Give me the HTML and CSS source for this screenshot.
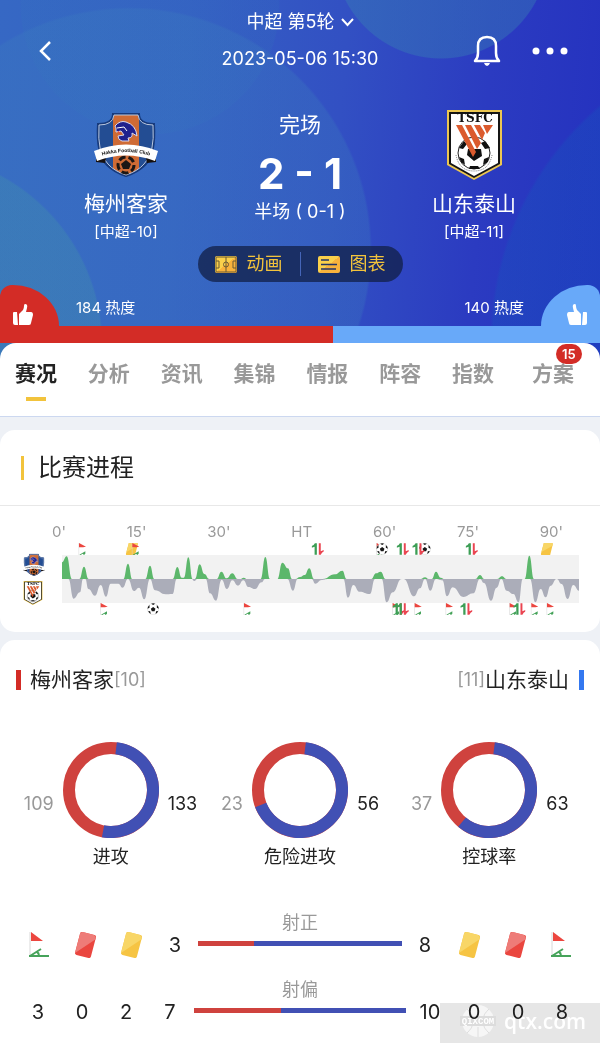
FILE: index.html
```
<!DOCTYPE html>
<html lang="zh-CN">
<head>
    <meta charset="UTF-8">
    <meta name="viewport" content="width=device-width, initial-scale=1.0">
    <title>梅州客家 2-1 山东泰山</title>
    <link rel="stylesheet" href="styles.css">
</head>
<body>
    <!-- Shared icons -->
    <svg class="sprite" aria-hidden="true">
        <defs>
            <linearGradient id="gold" x1="0" y1="0" x2="1" y2="1">
                <stop offset="0.5" stop-color="#fad04b"/>
                <stop offset="0.5" stop-color="#f8b23c"/>
            </linearGradient>
            <clipPath id="shield">
                <path d="M17 2H46Q46 12 62 12Q64 42 52 53Q44 60 32 64Q20 60 12 53Q0 42 2 12Q17 12 17 2Z"/>
            </clipPath>
        </defs>
        <symbol id="crest-hakka" viewBox="0 0 64 66">
            <path d="M19 2H45Q45 12 60 12Q62 42 51 53Q44 60 32 64Q20 60 13 53Q2 42 4 12Q19 12 19 2Z" fill="#234d93"/>
            <path d="M19 2H45V64H19Z" fill="#cf6b35" clip-path="url(#shield)"/>
            <path d="M19 2H45Q45 12 60 12Q62 42 51 53Q44 60 32 64Q20 60 13 53Q2 42 4 12Q19 12 19 2Z" fill="none" stroke="#173a7c" stroke-width="2"/>
            <path d="M20 3H44Q45 13 59 13Q61 42 50 52Q44 59 32 63Q20 59 14 52Q3 42 5 13Q19 13 20 3Z" fill="none" stroke="#b9c6dc"/>
            <path d="M21 14Q26 8 32 10Q42 13 43 24L38 21Q39 26 34 26L35 29L28 29Q24 28 24 24L30 23L27 19L22 20L22 16Z" fill="#21208d" stroke="#d9d8ee" stroke-width="1"/>
            <path d="M23 16L30 15L33 19" fill="none" stroke="#fff" stroke-width="1"/>
            <path d="M24 19L26 22" stroke="#e44" stroke-width="1"/>
            <circle cx="32" cy="53" r="8" fill="#cf6b35" stroke="#1c1715" stroke-width="3" stroke-dasharray="7 3"/>
            <path d="M32 48L37 52L35 57H29L27 52Z" fill="#1c1715"/>
            <path d="M2 47L12 46L11 51L2 50ZM62 47L52 46L53 51L62 50Z" fill="#16100f"/>
            <path d="M0 39Q32 26 64 39L61 49Q32 38 3 49Z" fill="#fff"/>
            <path id="ribbon" d="M4 45Q32 35 60 45" fill="none"/>
            <text class="crest-name" text-anchor="middle"><textPath href="#ribbon" startOffset="50%">Hakka Football Club</textPath></text>
        </symbol>
        <symbol id="crest-tsfc" viewBox="0 0 55 70">
            <path d="M0 0H55V55L27 70L0 55Z" fill="#ecc751"/>
            <path d="M2 2H53V54L27 68L2 54Z" fill="#151515"/>
            <path d="M4 4H51V53L27 66L4 53Z" fill="#fff"/>
            <text class="crest-initials" x="28" y="12" text-anchor="middle">TSFC</text>
            <circle cx="27" cy="43" r="16" fill="#fff" stroke="#222" stroke-width="1"/>
            <path d="M21 39L34 39L35 46L27 51L20 45ZM12 38L17 31L20 34L16 39ZM43 38L38 31L34 33L38 39ZM12 47L17 49L18 55L14 52ZM42 47L37 49L36 55L41 52ZM23 56L31 56L33 59H22Z" fill="#111"/>
            <path d="M9 15H15L29 42L26 47ZM18 15H24L34 33L30 39ZM27 15H33L38 23L35 30ZM36 15H46L40 24Z" fill="#db5b2e"/>
            <path d="M9 45Q12 61 27 61Q42 61 45 45" fill="none" stroke="#777" stroke-width="1" stroke-dasharray="1 1"/>
        </symbol>
        <symbol id="thumb" viewBox="0 0 20 22">
            <path d="M0 9Q0 8 1 8H4L5 21H2Q0 21 0 19ZM6 21V10L10 6Q11 4 11 2Q11 0 12 0Q15 0 14 4L13 8H18Q20 8 20 11L18 19Q18 21 16 21Z" fill="#fff"/>
        </symbol>
        <symbol id="corner" viewBox="0 0 21 26">
            <path d="M1 0V24" stroke="#d8d8d8" stroke-width="1"/>
            <path d="M2 0L14 9H2Z" fill="#ec463f"/>
            <path d="M0 24H20M1 24L12 17M8 20Q10 21 10 24" fill="none" stroke="#46a35a" stroke-width="2"/>
        </symbol>
        <symbol id="mini-corner" viewBox="0 0 24 36">
            <path d="M1 0V36" stroke="#d8d8d8" stroke-width="2"/>
            <path d="M2 0L23 11L14 13H2Z" fill="#ec463f"/>
            <path d="M3 35L21 25V32L17 36L13 32L7 36Z" fill="#46a35a"/>
        </symbol>
        <symbol id="card-red" viewBox="0 0 21 26">
            <path d="M7 2L19 5L14 24L2 21Z" fill="#ea463f" stroke="#ea463f" stroke-width="4" stroke-linejoin="round"/>
            <path d="M5 2Q5 0 8 0L19 3Q21 4 21 7L0 21Z" fill="#ee7c78"/>
        </symbol>
        <symbol id="card-yellow" viewBox="0 0 21 26">
            <path d="M7 2L19 5L14 24L2 21Z" fill="#f6c443" stroke="#f6c443" stroke-width="4" stroke-linejoin="round"/>
            <path d="M5 2Q5 0 8 0L19 3Q21 4 21 7L0 21Z" fill="#f8d667"/>
        </symbol>
        <symbol id="mini-card" viewBox="0 0 36 36">
            <path d="M9 0H34Q36 0 36 3L28 36H2Q0 36 0 33Z" fill="#f6c443"/>
            <path d="M9 0H34Q36 0 35 8L2 27Z" fill="#f8d667"/>
        </symbol>
        <symbol id="sub" viewBox="0 0 38 36">
            <path d="M0 9Q7 7 10 0H16V36H9V11L0 14Z" fill="#3c9e55"/>
            <path d="M22 0H28V25L37 21V26Q31 28 28 36H22Z" fill="#ea4450"/>
        </symbol>
        <symbol id="ball" viewBox="0 0 36 36">
            <circle cx="18" cy="18" r="17" fill="#fff" stroke="#bbb" stroke-width="1"/>
            <path d="M18 12L25 17L22 25H14L11 17ZM12 2Q18 0 24 2L18 6ZM29 6Q35 11 35 17L29 14ZM7 6Q1 11 1 17L7 14ZM3 24L9 25L11 33Q5 30 3 24ZM33 24L27 25L25 33Q31 30 33 24Z" fill="#161616"/>
        </symbol>
    </svg>

    <header class="hero">
        <div class="topbar">
            <button class="icon-btn back" aria-label="返回">
                <svg width="16" height="22" viewBox="0 0 16 22"><path d="M13 2L4 11L13 20" fill="none" stroke="#fff" stroke-width="2.5"/></svg>
            </button>
            <div class="round">
                <button class="round-btn">中超 第5轮
                    <svg width="13" height="9" viewBox="0 0 13 9"><path d="M1 1L6.500 7L12 1" fill="none" stroke="#fff" stroke-width="2"/></svg>
                </button>
                <time>2023-05-06 15:30</time>
            </div>
            <div class="actions">
                <button class="icon-btn" aria-label="提醒">
                    <svg width="28" height="32" viewBox="0 0 28 32"><path d="M2 26Q5 23 5 18V11Q5 2 14 2Q23 2 23 11V18Q23 23 26 26Z" fill="none" stroke="#fff" stroke-width="2.500" stroke-linejoin="round"/><path d="M11 28H17Q16 31 14 31Q12 31 11 28Z" fill="#fff"/></svg>
                </button>
                <button class="icon-btn" aria-label="更多">
                    <svg width="36" height="8" viewBox="0 0 36 8"><g fill="#fff"><circle cx="4" cy="4" r="3.500"/><circle cx="18" cy="4" r="3.500"/><circle cx="32" cy="4" r="3.500"/></g></svg>
                </button>
            </div>
        </div>

        <section class="match">
            <div class="team">
                <svg class="crest" width="64" height="70"><use href="#crest-hakka"/></svg>
                <h2>梅州客家</h2>
                <p>[中超-10]</p>
            </div>
            <div class="result">
                <p class="status">完场</p>
                <p class="score">2 - 1</p>
                <p class="half">半场 ( 0-1 )</p>
            </div>
            <div class="team">
                <svg class="crest" width="55" height="70"><use href="#crest-tsfc"/></svg>
                <h2>山东泰山</h2>
                <p>[中超-11]</p>
            </div>
        </section>

        <div class="pill">
            <button>
                <svg width="22" height="17" viewBox="0 0 22 17"><rect width="22" height="17" rx="2" fill="url(#gold)"/><g fill="none" stroke="#6b5a35" stroke-width="1"><rect x="1" y="1" width="20" height="15" rx="1"/><path d="M11 1V16M1 5H4V12H1M21 5H18V12H21"/><circle cx="11" cy="8.500" r="2.500"/></g></svg>
                动画
            </button>
            <button>
                <svg width="22" height="17" viewBox="0 0 22 17"><rect width="22" height="17" rx="2" fill="url(#gold)"/><path d="M3 4H11M3 8.500H19M3 13H18" stroke="#243566" stroke-width="1.500"/></svg>
                图表
            </button>
        </div>

        <div class="heat">
            <button class="like like-home" aria-label="支持梅州客家"><svg width="20" height="22"><use href="#thumb"/></svg></button>
            <span>184 热度</span>
            <span class="heat-away">140 热度</span>
            <button class="like like-away" aria-label="支持山东泰山"><svg width="20" height="22"><use href="#thumb"/></svg></button>
        </div>
        <div class="heat-bar"><div style="width: 55.5%"></div></div>

        <nav class="tabs">
            <a class="active" href="#live">赛况</a>
            <a href="#analysis">分析</a>
            <a href="#news">资讯</a>
            <a href="#clips">集锦</a>
            <a href="#intel">情报</a>
            <a href="#lineup">阵容</a>
            <a href="#odds">指数</a>
            <a class="plans" href="#plans">方案<span class="badge">15</span></a>
        </nav>
    </header>

    <main id="live">
        <section class="card">
            <h3 class="card-title">比赛进程</h3>
            <div class="timeline">
                <div class="axis">
                    <span>0'</span><span>15'</span><span>30'</span><span>HT</span><span>60'</span><span>75'</span><span>90'</span>
                </div>
                <div class="momentum">
                    <div class="mini-crests">
                        <svg width="22" height="24"><use href="#crest-hakka"/></svg>
                        <svg width="20" height="24"><use href="#crest-tsfc"/></svg>
                    </div>
                    <svg class="chart" viewBox="0 0 1551 216">
                        <rect y="36" width="1551" height="144" fill="#f2f2f2"/>
                        <path id="homeWave" fill="#5cb76b"/>
                        <path id="awayWave" fill="#abadb9"/>
                        <g id="events"></g>
                    </svg>
                </div>
            </div>
        </section>

        <section class="card stats">
            <div class="teams">
                <h3 class="home">梅州客家<small>[10]</small></h3>
                <h3 class="away"><small>[11]</small>山东泰山</h3>
            </div>

            <div class="donuts">
                <div class="donut">
                    <span class="lose">109</span>
                    <svg width="96" height="96" viewBox="0 0 96 96"><circle class="ring" cx="48" cy="48" r="42"/><circle class="ring part" cx="48" cy="48" r="42" pathLength="360" stroke-dasharray="184 176"/></svg>
                    <span>133</span>
                    <p>进攻</p>
                </div>
                <div class="donut">
                    <span class="lose">23</span>
                    <svg width="96" height="96" viewBox="0 0 96 96"><circle class="ring" cx="48" cy="48" r="42"/><circle class="ring part" cx="48" cy="48" r="42" pathLength="360" stroke-dasharray="242 118"/></svg>
                    <span>56</span>
                    <p>危险进攻</p>
                </div>
                <div class="donut">
                    <span class="lose">37</span>
                    <svg width="96" height="96" viewBox="0 0 96 96"><circle class="ring" cx="48" cy="48" r="42"/><circle class="ring part" cx="48" cy="48" r="42" pathLength="360" stroke-dasharray="213 147"/></svg>
                    <span>63</span>
                    <p>控球率</p>
                </div>
            </div>

            <div class="stat-row">
                <svg width="21" height="26"><use href="#corner"/></svg>
                <svg width="21" height="26"><use href="#card-red"/></svg>
                <svg width="21" height="26"><use href="#card-yellow"/></svg>
                <b>3</b>
                <div class="compare">
                    <span>射正</span>
                    <div class="bar"><div style="width: 27.3%"></div></div>
                </div>
                <b>8</b>
                <svg width="21" height="26"><use href="#card-yellow"/></svg>
                <svg width="21" height="26"><use href="#card-red"/></svg>
                <svg width="21" height="26"><use href="#corner"/></svg>
            </div>
            <div class="stat-row numbers">
                <b>3</b>
                <b>0</b>
                <b>2</b>
                <b>7</b>
                <div class="compare">
                    <span>射偏</span>
                    <div class="bar"><div style="width: 41.2%"></div></div>
                </div>
                <b>10</b>
                <b>0</b>
                <b>0</b>
                <b>8</b>
            </div>

            <div class="watermark">
                <svg width="36" height="34" viewBox="0 0 36 34">
                    <circle cx="18" cy="17" r="16" fill="#f6f6f6"/>
                    <g fill="none" stroke="#dedede" stroke-width="1"><path d="M18 1V11M18 23V33M7 5Q12 10 12 12M29 5Q24 10 24 12M7 29Q12 24 12 22M29 29Q24 24 24 22"/></g>
                    <path d="M0 12H36V22H0Z" fill="#dcdcdc"/>
                    <text x="18" y="20" text-anchor="middle">QIXCOM</text>
                </svg>
                <span>qtx.com</span>
            </div>
        </section>
    </main>

    <script src="script.js"></script>
</body>
</html>
```
FILE: styles.css
```
:root {
    --red: #d32c26;
    --sky: #68a9f9;
    --gold: #f2c33c;
    --ring-red: #cf423e;
    --ring-blue: #4150b4;
    --muted: #999;
}

* {
    box-sizing: border-box;
    margin: 0;
    padding: 0;
}

body {
    min-height: 100vh;
    display: flex;
    flex-direction: column;
    font-family: Inter, 'Noto Sans CJK SC', sans-serif;
    background: #eef1f6;
    color: #222;
}

button {
    border: 0;
    background: none;
    color: inherit;
    font: inherit;
    cursor: pointer;
}

a {
    color: inherit;
    text-decoration: none;
}

svg {
    display: block;
}

.sprite {
    position: absolute;
    width: 0;
    height: 0;
}

.crest-name {
    font: bold 5px 'Liberation Sans', sans-serif;
    fill: #111;
}

.crest-initials {
    font: bold 12px 'DejaVu Serif', serif;
    fill: #111;
}

/* Header */
.hero {
    padding-top: 7px;
    color: #fff;
    background:
        radial-gradient(circle 108px at 73.5% -49px, rgba(56, 130, 180, 0.4) 99%, transparent),
        radial-gradient(circle 193px at -15% 345px, rgba(66, 145, 170, 0.35) 99%, transparent),
        radial-gradient(circle 243px at 21.5% 250px, rgba(60, 125, 190, 0.3) 99%, transparent),
        radial-gradient(circle 308px at 133% 340px, rgba(20, 90, 190, 0.3) 99%, transparent),
        radial-gradient(circle 130px at 25% 5px, rgba(50, 120, 185, 0.15) 99%, transparent),
        linear-gradient(95deg, #3668c4 0%, #3560c4 30%, #3250c3 55%, #2b3bc1 78%, #2431bf 100%);
}

.topbar {
    display: grid;
    grid-template-columns: 1fr auto 1fr;
    align-items: center;
    padding: 0 32px;
}

.back {
    justify-self: start;
    margin: 20px 0 0 5px;
}

.round {
    display: flex;
    flex-direction: column;
    align-items: center;
    gap: 7px;
    font-size: 18px;
    line-height: 30px;
}

.round-btn {
    display: flex;
    align-items: center;
    gap: 6px;
}

.actions {
    display: flex;
    justify-content: flex-end;
    align-items: center;
    gap: 31px;
    margin-top: 20px;
}

.match {
    display: grid;
    grid-template-columns: repeat(3, 1fr);
    margin-top: 36px;
    padding: 0 39px;
    text-align: center;
}

.crest {
    margin: 0 auto 10px;
}

.team h2 {
    font-size: 21px;
    font-weight: 400;
    line-height: 28px;
}

.team p {
    margin-top: 4px;
    font-size: 15px;
    line-height: 20px;
}

.status {
    font-size: 21px;
    line-height: 30px;
}

.score {
    margin-top: 9px;
    font-size: 42px;
    font-weight: 700;
    line-height: 50px;
}

.half {
    font-size: 18px;
    line-height: 26px;
}

.pill {
    display: flex;
    width: max-content;
    margin: 4px auto 0;
    padding: 6px 0;
    border-radius: 18px;
    background: rgba(18, 31, 70, 0.75);
    color: var(--gold);
    font-size: 18px;
    line-height: 24px;
}

.pill button {
    display: flex;
    align-items: center;
    gap: 10px;
    padding: 0 17px;
}

.pill button + button {
    border-left: 1px solid #4565b8;
}

.heat {
    display: flex;
    align-items: center;
    gap: 17px;
    margin-top: 3px;
    font-size: 15px;
    line-height: 20px;
}

.heat span {
    padding-top: 5px;
}

.heat-away {
    margin-left: auto;
}

.like {
    display: grid;
    place-items: center start;
    width: 59px;
    height: 41px;
    padding: 18px 0 0 13px;
}

.like-home {
    border-radius: 12px 46px 0 0 / 12px 41px 0 0;
    background: var(--red);
}

.like-away {
    border-radius: 46px 12px 0 0 / 41px 12px 0 0;
    background: var(--sky);
    place-items: center end;
    padding: 18px 13px 0 0;
}

.like-away svg {
    transform: scaleX(-1);
}

.heat-bar {
    height: 17px;
    background: var(--sky);
}

.heat-bar div {
    height: 100%;
    background: var(--red);
}

.tabs {
    display: flex;
    justify-content: space-between;
    height: 74px;
    padding: 16px 26px 0 15px;
    border-bottom: 1px solid #ccd8f0;
    border-radius: 16px 16px 0 0;
    background: #fff;
    color: var(--muted);
    font-size: 21px;
    font-weight: 600;
    line-height: 30px;
}

.tabs .active {
    color: #222;
}

.tabs .active::after {
    content: '';
    display: block;
    width: 20px;
    height: 4px;
    margin: 8px auto 0;
    background: var(--gold);
}

.tabs .plans {
    position: relative;
    margin-left: 7px;
}

.badge {
    position: absolute;
    top: -15px;
    right: -8px;
    width: 26px;
    border-radius: 10px;
    background: var(--red);
    color: #fff;
    font-size: 13px;
    line-height: 20px;
    text-align: center;
}

/* Cards */
main {
    flex: 1;
    display: flex;
    flex-direction: column;
    gap: 8px;
    padding-top: 13px;
}

.card {
    border-radius: 15px;
    background: #fff;
}

.card-title {
    display: flex;
    align-items: center;
    gap: 14px;
    padding: 0 21px;
    border-bottom: 1px solid #e8e8e8;
    font-size: 24px;
    font-weight: 400;
    line-height: 75px;
}

.card-title::before {
    content: '';
    width: 3px;
    height: 24px;
    background: var(--gold);
}

.timeline {
    padding: 15px 21px 17px 23px;
}

.axis {
    display: flex;
    justify-content: space-between;
    padding: 0 16px 0 29px;
    color: var(--muted);
    font-size: 15px;
    line-height: 22px;
}

.momentum {
    display: grid;
    grid-template-columns: 39px 1fr;
    align-items: center;
}

.mini-crests {
    display: grid;
    gap: 4px;
}

.chart {
    width: 100%;
}

.stats {
    position: relative;
    flex: 1;
    padding: 25px 16px 10px;
    border-radius: 15px 15px 0 0;
}

.teams {
    display: flex;
    justify-content: space-between;
}

.teams h3 {
    display: flex;
    align-items: center;
    font-size: 21px;
    font-weight: 400;
    line-height: 30px;
}

.teams small {
    color: var(--muted);
    font-size: 18px;
}

.home::before,
.away::after {
    content: '';
    width: 5px;
    height: 20px;
    background: var(--red);
}

.home::before {
    margin-right: 9px;
}

.away::after {
    margin-left: 10px;
    background: #3478f0;
}

.donuts {
    display: grid;
    grid-template-columns: repeat(3, 1fr);
    margin-top: 47px;
}

.donut {
    display: grid;
    grid-template-columns: 1fr auto 1fr;
    align-items: center;
    column-gap: 9px;
    font-size: 18px;
    line-height: 26px;
}

.donut span {
    padding-top: 27px;
}

.donut .lose {
    color: var(--muted);
    text-align: right;
}

.donut p {
    grid-column: 1 / -1;
    margin-top: 6px;
    text-align: center;
}

.ring {
    fill: none;
    stroke: var(--ring-red);
    stroke-width: 12px;
}

.part {
    stroke: var(--ring-blue);
    transform: rotate(-83deg);
    transform-origin: center;
}

.stat-row {
    display: grid;
    grid-template-columns: repeat(3, 46px) 42px 1fr 42px repeat(3, 46px);
    align-items: end;
    justify-items: center;
    margin-top: 40px;
}

.stat-row b {
    font-size: 20px;
    font-weight: 400;
    line-height: 26px;
}

.numbers {
    grid-template-columns: repeat(4, 44px) 1fr repeat(4, 44px);
    margin-top: 19px;
}

.compare {
    width: 100%;
    padding: 0 2px 12px;
    color: var(--muted);
    font-size: 18px;
    line-height: 26px;
    text-align: center;
}

.bar {
    height: 5px;
    margin-top: 5px;
    background: var(--ring-blue);
}

.bar div {
    height: 100%;
    background: var(--ring-red);
}

.watermark {
    position: absolute;
    right: 0;
    bottom: 0;
    display: flex;
    align-items: center;
    gap: 8px;
    width: 160px;
    height: 40px;
    padding: 0 0 4px 20px;
    background: #e6e6e6;
    mix-blend-mode: multiply;
    color: #fff;
    font: 600 21px 'Open Sans', sans-serif;
}

.watermark text {
    font: bold 9px 'Liberation Mono', monospace;
    fill: #fff;
}
```
FILE: script.js
```
// [x, height] pairs, measured from the middle line of the chart
const home = [
    [0, 50], [14, 68], [30, 0], [52, 0], [66, 37], [80, 0], [184, 0], [198, 46], [211, 0],
    [250, 0], [264, 40], [277, 0], [332, 0], [346, 36], [359, 4], [366, 4], [379, 65], [392, 0],
    [399, 0], [413, 44], [427, 15], [442, 0], [464, 0], [478, 22], [494, 2], [511, 17], [527, 0],
    [534, 0], [545, 4], [556, 0], [596, 0], [610, 66], [624, 0], [646, 0], [661, 49], [678, 32],
    [690, 0], [700, 0], [714, 6], [728, 12], [742, 32], [756, 0], [782, 0], [819, 14], [841, 25],
    [854, 0], [928, 0], [942, 17], [956, 22], [971, 0], [1076, 0], [1089, 5], [1100, 0],
    [1109, 0], [1122, 22], [1136, 4], [1148, 0], [1240, 0], [1254, 12], [1267, 0], [1306, 0],
    [1320, 8], [1333, 0], [1388, 0], [1402, 70], [1416, 0], [1551, 0]
];
const away = [
    [0, 0], [19, 0], [35, 59], [54, 40], [63, 0], [70, 0], [79, 30], [99, 50], [116, 18],
    [132, 53], [146, 14], [169, 14], [182, 26], [198, 0], [216, 36], [231, 26], [247, 61],
    [264, 0], [279, 34], [311, 46], [332, 45], [344, 0], [389, 0], [397, 6], [406, 0], [431, 0],
    [444, 43], [462, 65], [479, 2], [495, 30], [511, 4], [528, 20], [544, 4], [559, 24],
    [579, 30], [599, 10], [609, 0], [676, 0], [693, 35], [707, 0], [749, 0], [760, 14], [779, 3],
    [799, 0], [844, 0], [858, 56], [874, 18], [892, 38], [924, 45], [939, 0], [959, 0],
    [974, 70], [992, 40], [1019, 0], [1025, 0], [1056, 52], [1074, 28], [1089, 0], [1105, 35],
    [1122, 0], [1141, 4], [1155, 52], [1172, 25], [1204, 54], [1234, 43], [1254, 0], [1266, 12],
    [1287, 65], [1304, 26], [1318, 0], [1334, 35], [1354, 45], [1370, 70], [1382, 0], [1404, 0],
    [1420, 70], [1436, 30], [1451, 55], [1466, 20], [1484, 0], [1499, 15], [1517, 60],
    [1534, 18], [1551, 35]
];

// [icon, x, row]
const events = [
    ['mini-corner', 49, 0], ['mini-card', 191, 0], ['mini-corner', 209, 0], ['sub', 749, 0],
    ['mini-corner', 942, 0], ['ball', 942, 0], ['sub', 1004, 0], ['ball', 1070, 0],
    ['sub', 1051, 0], ['sub', 1211, 0], ['mini-card', 1436, 0],
    ['mini-corner', 114, 1], ['ball', 255, 1], ['mini-corner', 544, 1],
    ['mini-corner', 990, 1], ['sub', 992, 1], ['sub', 1004, 1], ['mini-corner', 1056, 1],
    ['mini-corner', 1150, 1], ['sub', 1195, 1], ['mini-corner', 1341, 1], ['sub', 1354, 1],
    ['mini-corner', 1406, 1], ['mini-corner', 1453, 1]
];

function wave(points, dir) {
    const mid = 108;
    let d = `M0 ${mid}L0 ${mid + dir * points[0][1]}`;
    for (let i = 1; i < points.length; i++) {
        const [x0, h0] = points[i - 1];
        const [x1, h1] = points[i];
        const cx = (x0 + x1) / 2;
        d += `C${cx} ${mid + dir * h0} ${cx} ${mid + dir * h1} ${x1} ${mid + dir * h1}`;
    }
    return d + `V${mid}Z`;
}

document.getElementById('homeWave').setAttribute('d', wave(home, -1));
document.getElementById('awayWave').setAttribute('d', wave(away, 1));

document.getElementById('events').innerHTML = events.map(([icon, x, row]) => {
    const width = icon === 'mini-corner' ? 24 : 37;
    return `<use href="#${icon}" x="${x}" y="${row * 180}" width="${width}" height="36"/>`;
}).join('');
```
